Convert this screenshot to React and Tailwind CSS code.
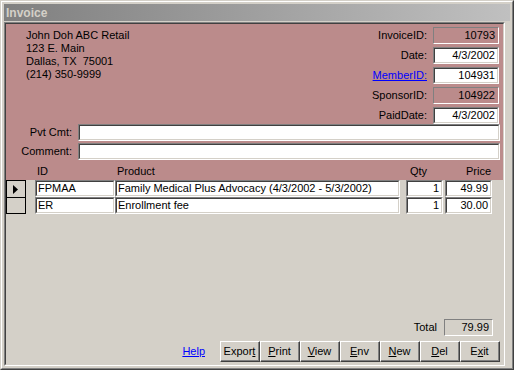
import React from 'react';

const PINK = 'bg-[#bb8b8b]';

function Sunken({ className = '', bg = 'bg-white', children }) {
  return (
    <div className={`border border-t-[#808080] border-l-[#808080] border-r-white border-b-white ${className}`}>
      <div className={`h-full w-full border border-t-[#404040] border-l-[#404040] border-r-[#d4d0c8] border-b-[#d4d0c8] ${bg} flex items-center overflow-hidden whitespace-nowrap`}>
        {children}
      </div>
    </div>
  );
}

function Flat({ className = '', bg, children }) {
  return (
    <div className={`border border-t-[#808080] border-l-[#808080] border-r-white border-b-white ${bg} flex items-center justify-end pr-[3px] ${className}`}>
      {children}
    </div>
  );
}

function Btn({ pre = '', u, post = '' }) {
  return (
    <div className="w-[40px] h-[21px] border border-t-white border-l-white border-r-[#404040] border-b-[#404040]">
      <div className="h-full w-full border-r border-b border-[#808080] flex items-center justify-center">
        <span>
          {pre}
          <span className="underline underline-offset-[1px]">{u}</span>
          {post}
        </span>
      </div>
    </div>
  );
}

const FIELDS = [
  { label: 'InvoiceID:', value: '10793', ro: true },
  { label: 'Date:', value: '4/3/2002' },
  { label: 'MemberID:', value: '104931', link: true },
  { label: 'SponsorID:', value: '104922', ro: true },
  { label: 'PaidDate:', value: '4/3/2002' },
];

const ROWS = [
  { id: 'FPMAA', product: 'Family Medical Plus Advocacy (4/3/2002 - 5/3/2002)', qty: '1', price: '49.99', current: true },
  { id: 'ER', product: 'Enrollment fee', qty: '1', price: '30.00' },
];

export default function App() {
  return (
    <div className="w-[514px] h-[370px] bg-[#d4d0c8] border border-t-[#d4d0c8] border-l-[#d4d0c8] border-r-[#404040] border-b-[#404040] font-['Liberation_Sans',Arial,sans-serif] text-[11px] text-black select-none">
      <div className="h-full w-full border border-t-white border-l-white border-r-[#808080] border-b-[#808080] p-[2px] flex flex-col">
        {/* title bar */}
        <div className="h-[17px] bg-gradient-to-r from-[#808080] to-[#c0c0c0] flex items-center pl-[2px]">
          <span className="text-[12px] font-bold text-[#d4d0c8] leading-none">Invoice</span>
        </div>

        {/* client area */}
        <div className="mt-[1px] w-[501px] h-[344px] border border-t-[#808080] border-l-[#808080] border-r-white border-b-white">
          <div className="h-full w-full border border-t-[#404040] border-l-[#404040] border-r-[#d4d0c8] border-b-[#d4d0c8] flex flex-col leading-[13px]">
            {/* header section */}
            <div className={`h-[156px] ${PINK} flex flex-col`}>
              <div className="flex">
                <div className="pl-[20px] pt-[5px]">
                  <div>John Doh ABC Retail</div>
                  <div>123 E. Main</div>
                  <div>Dallas, TX&nbsp; 75001</div>
                  <div>(214) 350-9999</div>
                </div>
                <div className="ml-auto mr-[4px] pt-[3px] flex flex-col gap-[3px]">
                  {FIELDS.map((f) => (
                    <div key={f.label} className="flex items-center justify-end h-[17px]">
                      <span className={f.link ? 'text-[#0000ff] underline' : ''}>{f.label}</span>
                      {f.ro ? (
                        <Flat className="ml-[6px] w-[66px] h-[17px]" bg={PINK}>{f.value}</Flat>
                      ) : (
                        <Sunken className="ml-[6px] w-[66px] h-[17px]">
                          <span className="ml-auto pr-[2px]">{f.value}</span>
                        </Sunken>
                      )}
                    </div>
                  ))}
                </div>
              </div>
              <div className="flex flex-col gap-[2px]">
                <div className="flex items-center h-[17px]">
                  <span className="w-[66px] text-right">Pvt Cmt:</span>
                  <Sunken className="ml-[6px] w-[422px] h-[17px]" />
                </div>
                <div className="flex items-center h-[17px]">
                  <span className="w-[66px] text-right">Comment:</span>
                  <Sunken className="ml-[6px] w-[422px] h-[17px]" />
                </div>
              </div>
              <div className="flex mt-[5px]">
                <div className="w-[31px]" />
                <div className="w-[80px]">ID</div>
                <div className="flex-1">Product</div>
                <div className="text-right">Qty</div>
                <div className="w-[64px] text-right">Price</div>
                <div className="w-[12px]" />
              </div>
            </div>

            {/* detail rows */}
            <div className="flex flex-col">
              {ROWS.map((r, i) => (
                <div key={r.id} className="flex h-[17px]">
                  <div className={`w-[20px] h-[17px] bg-[#d4d0c8] border-l border-r border-t border-black ${i === ROWS.length - 1 ? 'border-b' : ''} flex items-center justify-center`}>
                    {r.current && (
                      <svg width="6" height="9" viewBox="0 0 6 9">
                        <polygon points="0,0 5,4.5 0,9" fill="#000" />
                      </svg>
                    )}
                  </div>
                  <Sunken className="ml-[9px] w-[80px] h-[17px]">
                    <span className="pl-[1px]">{r.id}</span>
                  </Sunken>
                  <Sunken className="w-[285px] h-[17px]">
                    <span className="pl-[1px]">{r.product}</span>
                  </Sunken>
                  <Sunken className="ml-[6px] w-[37px] h-[17px]">
                    <span className="ml-auto pr-[2px]">{r.qty}</span>
                  </Sunken>
                  <Sunken className="ml-[2px] w-[47px] h-[17px]">
                    <span className="ml-auto pr-[2px]">{r.price}</span>
                  </Sunken>
                </div>
              ))}
            </div>

            <div className="flex-1" />

            {/* footer */}
            <div className="flex items-center justify-end mr-[10px] mb-[5px]">
              <span>Total</span>
              <Flat className="ml-[7px] w-[49px] h-[17px]" bg="bg-[#d4d0c8]">79.99</Flat>
            </div>
            <div className="flex items-center justify-end mr-[3px] mb-[2px]">
              <span className="text-[#0000ff] underline mr-[15px]">Help</span>
              <Btn pre="Expor" u="t" />
              <Btn u="P" post="rint" />
              <Btn u="V" post="iew" />
              <Btn u="E" post="nv" />
              <Btn u="N" post="ew" />
              <Btn u="D" post="el" />
              <Btn pre="E" u="x" post="it" />
            </div>
          </div>
        </div>
      </div>
    </div>
  );
}
